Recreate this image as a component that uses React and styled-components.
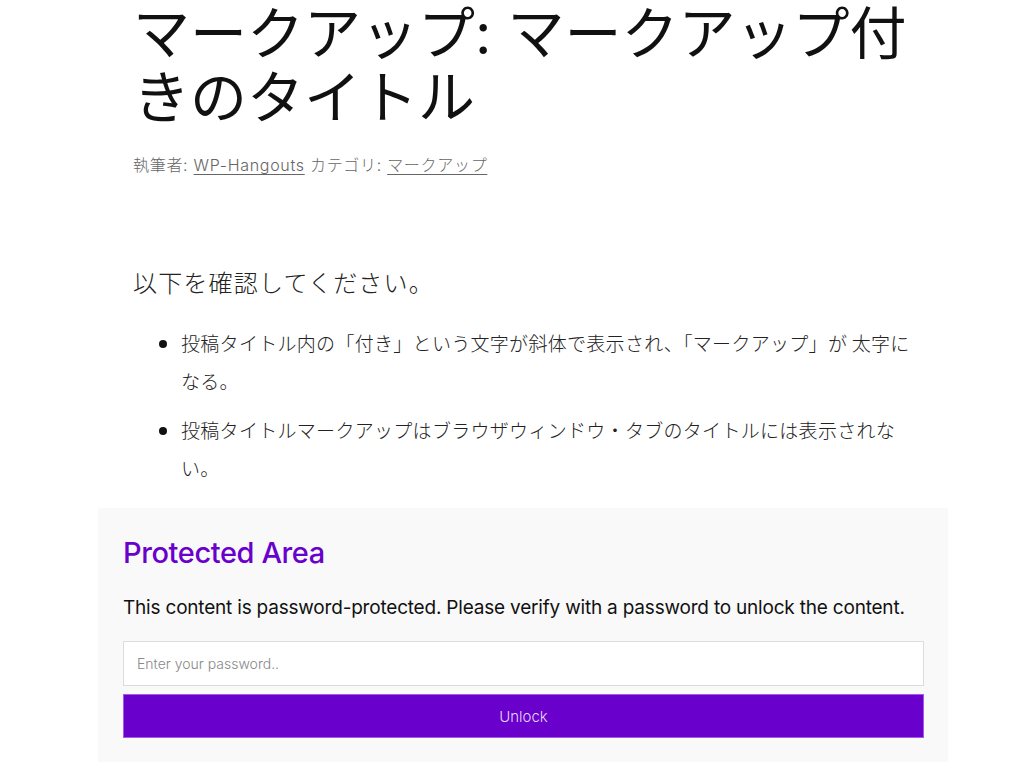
import React from "react";
import styled, { createGlobalStyle } from "styled-components";

const Global = createGlobalStyle`
  html, body { margin: 0; padding: 0; background: #fff; }
  body {
    font-family: Inter, "Noto Sans CJK JP", sans-serif;
    color: #111;
  }
`;

const Page = styled.main`
  display: flex;
  flex-direction: column;
`;

const Article = styled.article`
  margin: 0 0 0 133px;
  width: 785px;
`;

const Title = styled.h1`
  margin: 0;
  padding-top: 2px;
  font-family: Inter, "Noto Sans CJK JP", sans-serif;
  font-weight: 400;
  font-size: 57px;
  line-height: 64px;
  color: #111;
`;

const Meta = styled.div`
  margin-top: 22px;
  font-family: Inter, "Noto Sans CJK JP", sans-serif;
  font-weight: 300;
  font-size: 16px;
  color: #666;
  letter-spacing: 0.7px;
`;

const MetaLink = styled.a`
  color: #666;
  text-decoration: underline;
  text-underline-offset: 3px;
`;

const Intro = styled.p`
  margin: 88px 0 0 0;
  font-family: "Noto Sans CJK JP", sans-serif;
  font-weight: 300;
  font-size: 24px;
  line-height: 36px;
  letter-spacing: 1.2px;
  color: #222;
`;

const List = styled.ul`
  margin: 24px 0 0 0;
  padding-left: 48px;
  list-style: disc;
`;

const Item = styled.li`
  font-family: "Noto Sans CJK JP", sans-serif;
  font-weight: 300;
  font-size: 19px;
  line-height: 38px;
  letter-spacing: 0.3px;
  color: #222;
  margin-bottom: 11px;
  &::marker { font-size: 20px; color: #111; }
`;

const Protected = styled.section`
  margin: 10px 0 0 98px;
  width: 850px;
  box-sizing: border-box;
  background: #f9f9f9;
  padding: 26px 24px 24px 25px;
  display: flex;
  flex-direction: column;
`;

const PHeading = styled.h2`
  margin: 0;
  font-family: Inter, sans-serif;
  font-weight: 500;
  font-size: 29px;
  line-height: 38px;
  letter-spacing: -0.4px;
  color: #6a00cc;
`;

const PText = styled.p`
  margin: 23px 0 0 0;
  font-family: Inter, sans-serif;
  font-weight: 400;
  font-size: 19px;
  line-height: 26px;
  letter-spacing: -0.2px;
  color: #111;
`;

const PassInput = styled.input`
  margin-top: 20px;
  height: 45px;
  box-sizing: border-box;
  border: 1px solid #dcdcdc;
  background: #fff;
  padding: 0 13px;
  font-family: Inter, sans-serif;
  font-size: 14px;
  font-weight: 300;
  outline: none;
  &::placeholder { color: #888; }
`;

const UnlockButton = styled.button`
  margin-top: 8px;
  height: 44px;
  border: 1px solid #a35ae6;
  background: #6a00cc;
  color: #e6d6f7;
  font-family: Inter, sans-serif;
  font-weight: 300;
  font-size: 15px;
  cursor: pointer;
`;

export default function App() {
  return (
    <>
      <Global />
      <Page>
        <Article>
          <Title>マークアップ: マークアップ付きのタイトル</Title>
          <Meta>
            執筆者: <MetaLink href="#">WP-Hangouts</MetaLink> カテゴリ: <MetaLink href="#">マークアップ</MetaLink>
          </Meta>
          <Intro>以下を確認してください。</Intro>
          <List>
            <Item>投稿タイトル内の「付き」という文字が斜体で表示され、「マークアップ」が 太字になる。</Item>
            <Item>投稿タイトルマークアップはブラウザウィンドウ・タブのタイトルには表示されない。</Item>
          </List>
        </Article>
        <Protected>
          <PHeading>Protected Area</PHeading>
          <PText>This content is password-protected. Please verify with a password to unlock the content.</PText>
          <PassInput type="password" placeholder="Enter your password.." />
          <UnlockButton type="button">Unlock</UnlockButton>
        </Protected>
      </Page>
    </>
  );
}
